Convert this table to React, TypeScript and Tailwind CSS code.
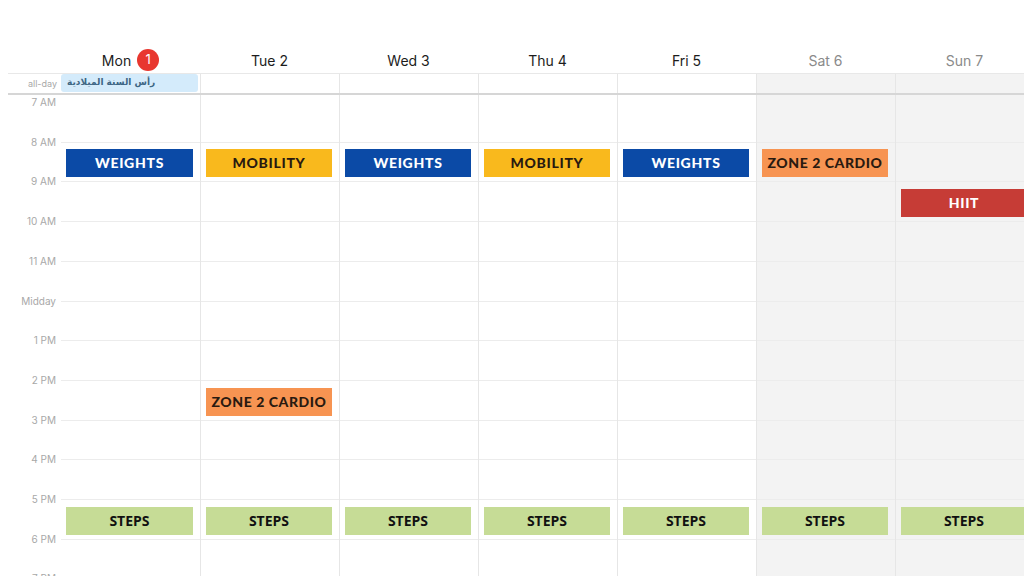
import React from "react";

const HOUR = 39.7;
const FIRST = 7; // offset of 7 AM line from grid top

const hours = ["7 AM", "8 AM", "9 AM", "10 AM", "11 AM", "Midday", "1 PM", "2 PM", "3 PM", "4 PM", "5 PM", "6 PM", "7 PM"];

type Ev = { label: string; at: number; kind: "weights" | "mobility" | "cardio" | "hiit" | "steps" };

const kinds: Record<Ev["kind"], string> = {
  weights: "bg-[#0b4aa6] text-white font-['Lato',sans-serif] font-black tracking-[0.05em]",
  mobility: "bg-[#f9b91d] text-[#2a1a10] font-['Lato',sans-serif] font-black tracking-[0.05em]",
  cardio: "bg-[#f79452] text-[#2a1a10] font-['Lato',sans-serif] font-black tracking-[0.04em]",
  hiit: "bg-[#c63c36] text-white font-['Lato',sans-serif] font-black tracking-[0.05em]",
  steps: "bg-[#c6dc96] text-[#111] font-['Open_Sans',sans-serif] font-bold",
};

const steps: Ev = { label: "STEPS", at: 17.2, kind: "steps" };

const days: { name: string; weekend?: boolean; today?: boolean; events: Ev[] }[] = [
  { name: "Mon", today: true, events: [{ label: "WEIGHTS", at: 8.18, kind: "weights" }, steps] },
  { name: "Tue 2", events: [{ label: "MOBILITY", at: 8.18, kind: "mobility" }, { label: "ZONE 2 CARDIO", at: 14.2, kind: "cardio" }, steps] },
  { name: "Wed 3", events: [{ label: "WEIGHTS", at: 8.18, kind: "weights" }, steps] },
  { name: "Thu 4", events: [{ label: "MOBILITY", at: 8.18, kind: "mobility" }, steps] },
  { name: "Fri 5", events: [{ label: "WEIGHTS", at: 8.18, kind: "weights" }, steps] },
  { name: "Sat 6", weekend: true, events: [{ label: "ZONE 2 CARDIO", at: 8.18, kind: "cardio" }, steps] },
  { name: "Sun 7", weekend: true, events: [{ label: "HIIT", at: 9.18, kind: "hiit" }, steps] },
];

export default function App() {
  return (
    <div className="w-[1024px] h-[576px] overflow-hidden bg-white font-['Inter',sans-serif]">
      <div className="w-[1034px]">
        {/* Header */}
        <div className="flex pt-[46px] h-[73px]">
          <div className="w-[61px] shrink-0" />
          {days.map((d) => (
            <div key={d.name} className="w-[139px] shrink-0 h-[28px] flex items-center justify-center gap-[6px]">
              <span className={`text-[14px] ${d.weekend ? "text-[#8a8a8a]" : "text-[#1c1c1c]"}`}>{d.name}</span>
              {d.today && (
                <span className="w-[22px] h-[22px] rounded-full bg-[#e8372f] text-white text-[13px] flex items-center justify-center">1</span>
              )}
            </div>
          ))}
        </div>
        <div className="ml-[8px] h-px bg-[#e8e8e8]" />

        {/* All-day row */}
        <div className="flex h-[19px]">
          <div className="w-[61px] shrink-0 flex items-center justify-end pr-[4px] text-[9px] text-[#a8a8a8]">all-day</div>
          {days.map((d, i) => (
            <div key={d.name} className={`w-[139px] shrink-0 ${i > 0 ? "border-l border-[#e6e6e6]" : ""} ${d.weekend ? "bg-[#f3f3f3]" : ""}`}>
              {i === 0 && (
                <div className="h-[18px] mr-[2px] rounded-[3px] bg-[#d4ebfb] flex items-center pl-[6px]">
                  <span dir="rtl" className="text-[9px] font-bold text-[#3d6684] font-['DejaVu_Sans',sans-serif]">رأس السنة الميلادية</span>
                </div>
              )}
            </div>
          ))}
        </div>
        <div className="ml-[8px] h-[2px] bg-[#d6d6d6]" />

        {/* Time grid */}
        <div className="flex">
          <div className="w-[61px] shrink-0 relative h-[490px]">
            {hours.map((h, i) => (
              <div
                key={h}
                className="absolute right-[5px] -translate-y-1/2 text-[10px] text-[#a8a8a8]"
                style={{ top: FIRST + i * HOUR }}
              >
                {h}
              </div>
            ))}
          </div>
          {days.map((d, i) => (
            <div key={d.name} className={`w-[139px] shrink-0 relative h-[490px] ${i > 0 ? "border-l border-[#e6e6e6]" : ""} ${d.weekend ? "bg-[#f3f3f3]" : ""}`}>
              {hours.slice(1).map((h, j) => (
                <div key={h} className="absolute left-0 right-0 h-px bg-[#ececec]" style={{ top: FIRST + (j + 1) * HOUR }} />
              ))}
              {d.events.map((e) => (
                <div
                  key={e.label + e.at}
                  className={`absolute left-[5px] right-[7px] h-[28px] flex items-center justify-center text-[14px] leading-none ${kinds[e.kind]}`}
                  style={{ top: FIRST + (e.at - 7) * HOUR }}
                >
                  {e.label}
                </div>
              ))}
            </div>
          ))}
        </div>
      </div>
    </div>
  );
}
